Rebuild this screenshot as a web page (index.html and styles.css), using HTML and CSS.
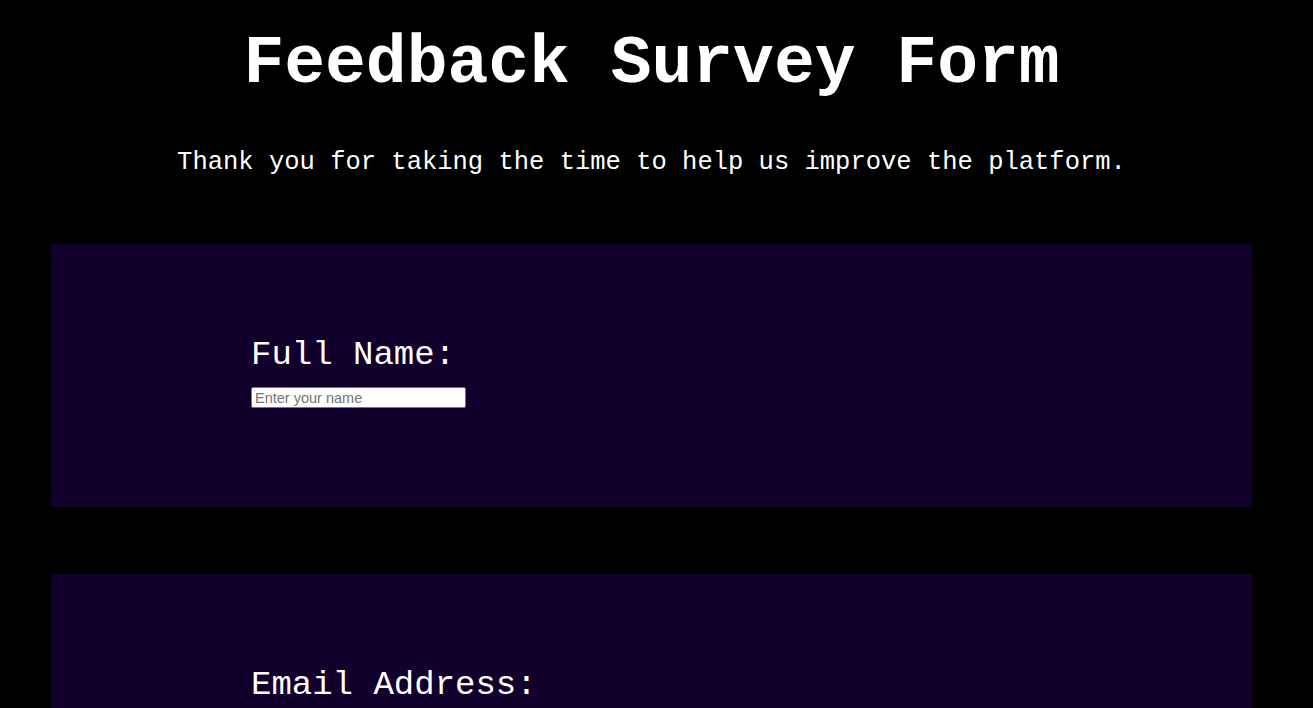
FILE: index.html
```html
<!DOCTYPE html>
<html lang="en">
<head>
<meta charset="utf-8">
<title>Feedback Survey Form</title>
<link rel="stylesheet" href="styles.css">
</head>
<body class="page">
  <header class="header">
    <h1 class="title">Feedback Survey Form</h1>
    <p class="subtitle">Thank you for taking the time to help us improve the platform.</p>
  </header>
  <form class="form">
    <section class="card">
      <label class="label" for="name">Full Name:</label>
      <input class="field" id="name" type="text" placeholder="Enter your name">
    </section>
    <section class="card">
      <label class="label" for="email">Email Address:</label>
      <input class="field" id="email" type="email" placeholder="Enter your email">
    </section>
  </form>
</body>
</html>
```
FILE: styles.css
```css
html, body {
  margin: 0;
  background: #000;
}
.page {
  padding: 0 61px 40px 51px;
  color: #fff;
  font-family: "Liberation Mono", "DejaVu Sans Mono", monospace;
}
.header {
  text-align: center;
}
.title {
  margin: 25px 0 0;
  font-size: 68px;
  font-weight: bold;
  line-height: normal;
}
.subtitle {
  margin: 46px 0 0;
  font-size: 25.5px;
  line-height: 29px;
}
.form {
  margin-top: 67px;
  display: flex;
  flex-direction: column;
  gap: 67px;
}
.card {
  background: #10002b;
  padding: 91px 200px 99px;
  display: flex;
  flex-direction: column;
  align-items: flex-start;
  gap: 12px;
}
.label {
  font-size: 34px;
  line-height: 40px;
}
.field {
  box-sizing: border-box;
  width: 215px;
  height: 21px;
  margin: 0;
  padding: 1px 3px;
  border: 1px solid #767676;
  border-radius: 2px;
  background: #fff;
  font-family: "Liberation Sans", Arial, sans-serif;
  font-size: 14.5px;
}
.field::placeholder {
  color: #757575;
}
```
